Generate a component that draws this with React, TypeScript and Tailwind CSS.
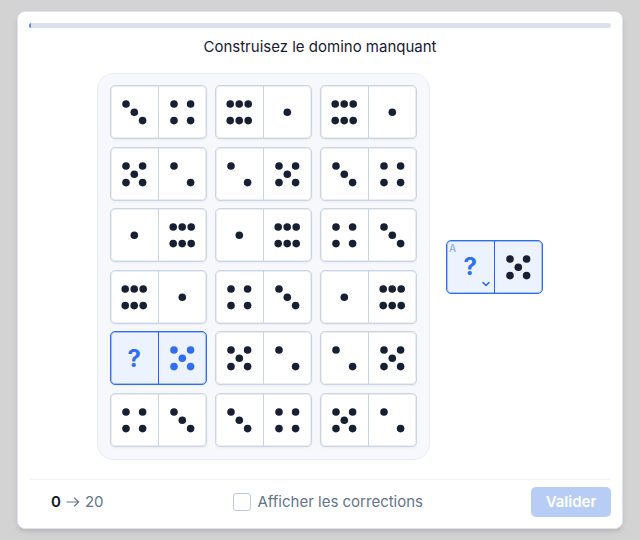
import { useState } from 'react';

type Face = number | '?';

const dominoes: [Face, Face][] = [
  [3, 4], [6, 1], [6, 1],
  [5, 2], [2, 5], [3, 4],
  [1, 6], [1, 6], [4, 3],
  [6, 1], [4, 3], [1, 6],
  ['?', 5], [5, 2], [2, 5],
  [4, 3], [3, 4], [5, 2],
];

//? pip centres on a 26x26 face
const pips: Record<number, [number, number][]> = {
  1: [[13.3, 13.3]],
  2: [[5, 5], [21.6, 21.6]],
  3: [[5, 5], [13.3, 13.3], [21.6, 21.6]],
  4: [[5, 5], [21.6, 5], [5, 21.6], [21.6, 21.6]],
  5: [[5, 5], [21.6, 5], [13.3, 13.3], [5, 21.6], [21.6, 21.6]],
  6: [[4.2, 5], [13.2, 5], [22.2, 5], [4.2, 21.6], [13.2, 21.6], [22.2, 21.6]],
};

function Pips({ value }: { value: number }) {
  return (
    <svg className="size-[26px]" viewBox="0 0 26 26" fill="currentColor" role="img" aria-label={String(value)}>
      {pips[value].map(([x, y]) => <circle key={`${x}-${y}`} cx={x} cy={y} r="3.8" />)}
    </svg>
  );
}

function Domino({ faces }: { faces: [Face, Face] }) {
  const missing = faces.includes('?');
  return (
    <div className={`grid h-[54px] w-[97px] grid-cols-2 divide-x rounded-[5px] border inset-ring-1 shadow-xs ${missing
      ? 'divide-[#2563eb] border-[#2f6fed] inset-ring-[#2f6fed]/40 bg-[#ecf3ff] text-[#2f6fed]'
      : 'divide-[#c9d4e3] border-[#cbd5e4] inset-ring-[#cbd5e4]/40 bg-white text-[#172033]'}`}>
      {faces.map((face, i) => (
        <div key={i} className="flex items-center justify-center">
          {face === '?' ? <span className="pt-0.5 text-2xl font-bold">?</span> : <Pips value={face} />}
        </div>
      ))}
    </div>
  );
}

function Answer() {
  return (
    <div className="grid h-[54px] w-[97px] grid-cols-2 divide-x divide-[#2563eb] rounded-[5px] border border-[#2f6fed] bg-[#ecf3ff] inset-ring-1 inset-ring-[#2f6fed]/40">
      <button className="relative flex cursor-pointer items-center justify-center text-2xl font-bold text-[#2f6fed]">
        <span className="absolute top-0.5 left-0.5 text-[10px] leading-[11px] font-semibold text-[#9ab4ee]">A</span>
        ?
        <svg className="absolute right-1 bottom-1.5 h-1.5 w-2" viewBox="0 0 8 6" fill="none" stroke="currentColor" strokeWidth="1.5" strokeLinecap="round" strokeLinejoin="round">
          <path d="M1 1.6 4 4.4 7 1.6" />
        </svg>
      </button>
      <button className="flex cursor-pointer items-center justify-center text-[#172033]">
        <Pips value={5} />
      </button>
    </div>
  );
}

export default function App() {
  const [corrections, setCorrections] = useState(false);

  return (
    <div className="flex min-h-screen flex-col bg-[#d3d3d3] px-[17px] py-[11px] font-['Inter',sans-serif]">
      <main className="flex flex-1 flex-col rounded-lg border border-[#dfe5f0] bg-white p-[11px] shadow-md">
        <div className="h-[5px] overflow-hidden rounded-full bg-[#dbe2ee]">
          <div className="h-full w-0.5 bg-[#4f8af5]" />
        </div>

        <h1 className="mt-[7px] text-center text-[15px] leading-6 text-[#172033]">Construisez le domino manquant</h1>

        <div className="mt-3.5 flex flex-1 items-start justify-center">
          <div className="flex items-center gap-4">
            <div className="rounded-2xl border border-[#e9edf6] bg-[#f6f8fc] px-3 pt-[11px] pb-3">
              <div className="grid h-[362px] grid-cols-3 content-between gap-x-2">
                {dominoes.map((faces, i) => <Domino key={i} faces={faces} />)}
              </div>
            </div>
            <Answer />
          </div>
        </div>

        <footer className="flex items-center justify-between border-t border-[#eff1f4] pt-[7px] text-[15px]">
          <div className="flex items-center gap-1 px-[22px] text-[#64748b]">
            <span className="font-semibold text-[#0f172a]">0</span>
            <svg className="size-4" viewBox="0 0 16 16" fill="none" stroke="currentColor" strokeWidth="1.2" strokeLinecap="round" strokeLinejoin="round">
              <path d="M2 8h11.6M9.4 3.8 13.6 8l-4.2 4.2" />
            </svg>
            <span>20</span>
          </div>
          <label className="flex items-center gap-1.5 text-[#64748b]">
            <input
              type="checkbox"
              className="size-[18px] appearance-none rounded-[3px] border border-[#bcc9dd] bg-white checked:bg-[#2f6fed]"
              checked={corrections}
              onChange={(e) => { setCorrections(e.target.checked) }}
            />
            Afficher les corrections
          </label>
          <button className="h-[30px] w-20 rounded-[5px] bg-[#b7cdf6] font-semibold text-white" disabled>
            Valider
          </button>
        </footer>
      </main>
    </div>
  );
}
